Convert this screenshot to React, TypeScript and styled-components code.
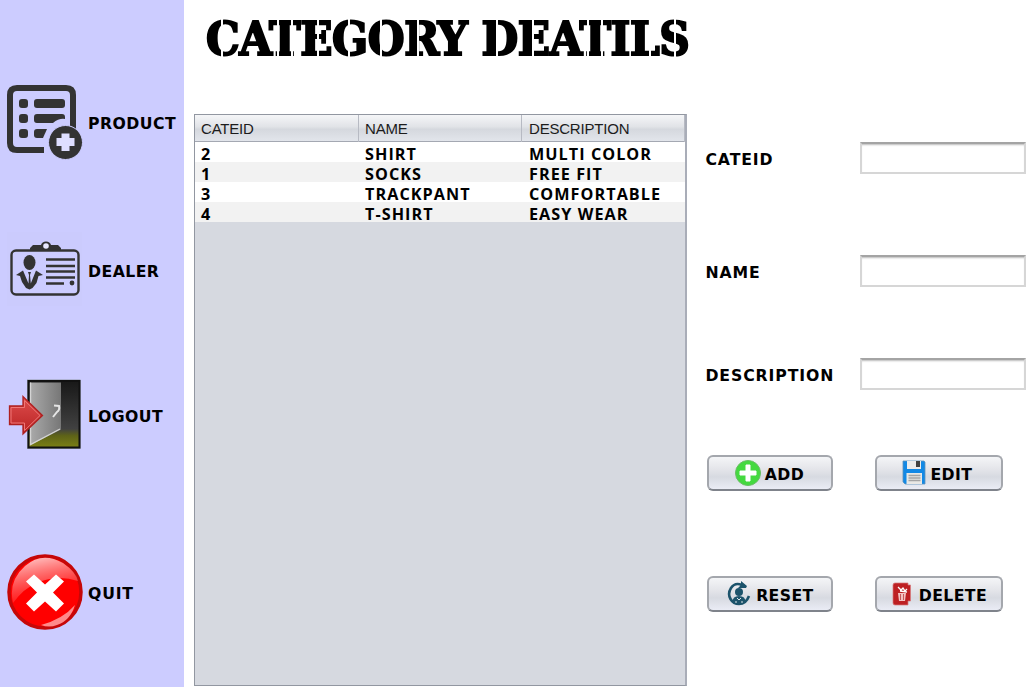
import React from "react";
import styled, { createGlobalStyle } from "styled-components";

const GlobalStyle = createGlobalStyle`
  * { box-sizing: border-box; }
  body { margin: 0; background: #fff; overflow: hidden; }
`;

const Window = styled.div`
  display: flex;
  width: 1035px;
  height: 687px;
  background: #fff;
  color: #000;
  font: bold 15.7px/20px "DejaVu Sans", sans-serif;
`;

const Sidebar = styled.nav`
  width: 184px;
  background: #ccccff;
  display: flex;
  flex-direction: column;
`;

const NavItem = styled.button<{ $gap: number; $tracking?: number }>`
  display: flex;
  align-items: center;
  height: 80px;
  margin: ${(p) => p.$gap}px 0 0;
  padding: 0 0 0 5px;
  border: 0;
  background: none;
  color: inherit;
  font: inherit;
  letter-spacing: ${(p) => p.$tracking ?? 0.45}px;
  white-space: nowrap;
  svg { flex: none; width: 80px; height: 80px; margin-right: 3px; }
  span { padding-top: 4px; }
`;

const Main = styled.main`
  width: 851px;
  display: flex;
  flex-direction: column;
`;

const stencilCuts = [222, 278, 292, 318, 349, 381, 418, 497, 533, 588, 602, 650, 675];
const stencilInk = `linear-gradient(90deg, ${stencilCuts
  .map((x) => x - 184)
  .map((x) => `#000 ${x - 0.6}px, #fff ${x - 0.6}px, #fff ${x + 0.9}px, #000 ${x + 0.9}px`)
  .join(", ")})`;

const Title = styled.h1`
  margin: 0;
  height: 114px;
  padding: 11px 0 0 22px;
  font: bold 47px/56px "DejaVu Serif", serif;
  font-stretch: condensed;
  letter-spacing: -0.4px;
  white-space: nowrap;
  background: ${stencilInk};
  -webkit-background-clip: text;
  background-clip: text;
  -webkit-text-stroke: 2px transparent;
  color: transparent;
`;

const Body = styled.div`
  display: flex;
  height: 573px;
`;

const TablePane = styled.section`
  width: 494px;
  height: 572px;
  margin-left: 10px;
  border: 1px solid #9297a1;
  border-right: 2px solid #a9adb8;
  background: #d6d9e0;
`;

const HeaderRow = styled.div`
  display: grid;
  grid-template-columns: 164px 163px 1fr;
  height: 27px;
  border-bottom: 1px solid #a4a8b2;
  background: linear-gradient(#f5f6f8 0%, #e1e3e7 45%, #d5d8de 55%, #e2e5eb 100%);
`;

const HeaderCell = styled.div`
  padding: 1px 0 0 6px;
  border-right: 1px solid #b7bac3;
  font: 15px/26px "Liberation Sans", sans-serif;
  letter-spacing: -0.2px;
  color: #1c1c1c;
  &:last-child { padding-left: 7px; }
`;

const Row = styled.div`
  display: grid;
  grid-template-columns: 164px 164px 1fr;
  height: 20px;
  background: #fff;
  &:nth-child(odd) { background: #f2f2f2; }
`;

const Cell = styled.div`
  padding: 2px 0 0 6px;
  font: bold 16.2px/20px "Open Sans", sans-serif;
  letter-spacing: 1.05px;
  white-space: nowrap;
`;

const Form = styled.form`
  width: 330px;
  margin-left: 18px;
  padding-top: 28px;
`;

const Field = styled.label<{ $after: number }>`
  display: grid;
  grid-template-columns: 155px 166px;
  align-items: center;
  height: 32px;
  margin-bottom: ${(p) => p.$after}px;
  letter-spacing: 0.9px;
  span { padding-top: 3px; }
`;

const Input = styled.input`
  width: 166px;
  height: 32px;
  border: 2px solid #d6d6d6;
  border-top-color: #a4a4a4;
  background: #fff;
  box-shadow: inset 0 2px 2px -1px #bbb;
  outline: 0;
`;

const Actions = styled.div`
  display: grid;
  grid-template-columns: 126px 128px;
  column-gap: 42px;
  row-gap: 85px;
  margin-left: 2px;
`;

const Action = styled.button<{ $gap: number; $nudge?: number }>`
  display: flex;
  align-items: center;
  justify-content: center;
  height: 36px;
  padding: 0 ${(p) => p.$nudge ?? 0}px 0 0;
  gap: ${(p) => p.$gap}px;
  border: 2px solid #a4a7ad;
  border-bottom-color: #7f838b;
  border-radius: 6px;
  background: linear-gradient(#f4f5f7 0%, #e3e4e9 40%, #d7dae1 62%, #eaecf5 100%);
  color: inherit;
  font: inherit;
  letter-spacing: 0.4px;
  svg { flex: none; }
  span { padding-top: 3px; }
`;

const ProductIcon = () => (
  <svg viewBox="0 0 80 80">
    <path d="M39 68H12q-7 0-7-7V13q0-7 7-7h49q7 0 7 7v37" fill="none" stroke="#333" strokeWidth="6" />
    <g fill="#333">
      <rect x="14" y="17" width="9" height="9" rx="3" /><rect x="29" y="17" width="31" height="9" rx="3" />
      <rect x="14" y="32" width="9" height="9" rx="3" />
      <path d="M32 32h25q3 0 3 3v2q-6-1-12 4H32q-3 0-3-3v-3q0-3 3-3Z" />
      <rect x="14" y="47" width="9" height="9" rx="3" />
      <path d="M32 47h10l-4 9h-6q-3 0-3-3v-3q0-3 3-3Z" />
    </g>
    <circle cx="60.500" cy="60.500" r="17" fill="#333" stroke="#ccccff" strokeWidth="1" />
    <path d="M56.500 51.500h8V56h5v8h-5v5h-8v-5h-5v-8h5Z" fill="#dedeff" />
  </svg>
);

const DealerIcon = () => (
  <svg viewBox="0 0 80 80">
    <rect x="2" y="2" width="75" height="74" fill="#cacafc" opacity=".5" />
    <g fill="#333">
      <rect x="6.500" y="20.500" width="67" height="44" rx="4.500" fill="#ccccff" stroke="#333" strokeWidth="2.400" />
      <path d="M25 20v-2l3-3h8q1-3.500 5-3.500t5 3.500h7l3 3v2Z" />
      <ellipse cx="24.500" cy="32.500" rx="6" ry="7.500" />
      <path d="m11 45 7-4.500 5.500 13L24 45l-1-3h3l-1 3 .8 8.500L31 40.500l7 4.500-4.500 1-2 7-4 5-3 1.500L21 58l-4-6-2-6Z" />
    </g>
    <circle cx="41" cy="16" r="2.800" fill="#e8e8ff" />
    <path d="M41 29.500h29M41 36h29M41 41.500h29M41 47.500h29M41 53.500h18" stroke="#333" strokeWidth="2.400" />
    <circle cx="67" cy="53" r="2.400" fill="#333" />
  </svg>
);

const LogoutIcon = () => (
  <svg viewBox="0 0 80 80">
    <defs>
      <linearGradient id="room" x1="0" y1="0" x2="0" y2="1">
        <stop stopColor="#181818" /><stop offset=".72" stopColor="#414141" /><stop offset=".82" stopColor="#5d6218" /><stop offset="1" stopColor="#7b8014" />
      </linearGradient>
      <linearGradient id="door"><stop stopColor="#aaa" /><stop offset="1" stopColor="#777" /></linearGradient>
      <linearGradient id="arrow" x1="0" y1="0" x2="0" y2="1"><stop stopColor="#de4d4d" /><stop offset="1" stopColor="#b92323" /></linearGradient>
    </defs>
    <rect x="22" y="4.500" width="53.500" height="69.500" fill="#929aaa" />
    <rect x="23.500" y="6" width="51" height="66.500" fill="url(#room)" stroke="#111" strokeWidth="2" />
    <path d="M25 7.500h31v47L25 70Z" fill="url(#door)" />
    <path d="M25.500 7.500v62L55 54" fill="none" stroke="#d4d4d4" strokeWidth="1.400" />
    <path d="m49 30.500 5 .5q1 4-2 6l-4 5" stroke="#e5e5e5" strokeWidth="2" fill="none" />
    <path d="M4.500 31H18V21.500L37.500 40.500 18 59V49.500H4.500Z" fill="url(#arrow)" stroke="#ae2020" strokeWidth="1.300" />
    <path d="M6 32.500h13.500v-7L35 40.500 19.500 55.500V48H6Z" fill="none" stroke="#ef7777" />
  </svg>
);

const QuitIcon = () => (
  <svg viewBox="0 0 80 80">
    <defs>
      <linearGradient id="gloss" x1="0" y1="0" x2=".3" y2="1"><stop stopColor="#fff" stopOpacity=".85" /><stop offset="1" stopColor="#f44" stopOpacity=".35" /></linearGradient>
    </defs>
    <circle cx="40" cy="40" r="36" fill="red" stroke="#c60708" strokeWidth="3.500" />
    <path d="M8 51Q3 29 20 14T58 11Q71 20 73 29 52 22 32 31 19 36 8 51Z" fill="url(#gloss)" />
    <path d="M36 73q22-6 34-20-5 16-18 20-8 3-16 0Z" fill="#ff8a8a" />
    <path d="m29 22.500 11 10 11-10 8 7-11 11 11 11-8 8-11-10-11 10-8-8 11-11-11-11Z" fill="#fff" />
  </svg>
);

const AddIcon = () => (
  <svg width="26" height="26" viewBox="0 0 26 26">
    <circle cx="13" cy="13" r="12.500" fill="#44d93f" stroke="#67be62" />
    <path d="M11 5h4v6h6v4h-6v6h-4v-6H5v-4h6Z" fill="#fff" stroke="#fff" strokeLinejoin="round" />
  </svg>
);

const EditIcon = () => (
  <svg width="24" height="26" viewBox="0 0 24 26">
    <path d="M1 1h21l1 1v22H3l-2-2Z" fill="#1389e5" stroke="#5e92bb" strokeWidth=".8" />
    <path d="M5 1h14v8H5Z" fill="#ececec" /><path d="M14 1h4v6h-4Z" fill="#424242" />
    <path d="M4.500 13H20v11H4.500Z" fill="#e9e8e5" />
    <path d="M6.500 15.500h12M6.500 18h12M6.500 20.500h12" stroke="#a4a4a4" strokeWidth="1.300" />
  </svg>
);

const ResetIcon = () => (
  <svg width="24" height="26" viewBox="0 0 24 26">
    <path d="M15 4Q8 1 4 7c-5 8 1 16 8 16q7 0 10-8" fill="none" stroke="#1c536b" strokeWidth="2.600" />
    <path d="m14 0 6 5-1 2h-8l3-3Z" fill="#1c536b" />
    <ellipse cx="12" cy="11" rx="4" ry="4" fill="#1c536b" />
    <path d="M5.500 21q0-6 6.500-6t6.500 6q-6.500 4-13 0Z" fill="#1c536b" />
    <path d="m10 17 2 2 2-2M9 20v2M15 20v2" stroke="#dce5e9" fill="none" />
  </svg>
);

const DeleteIcon = () => (
  <svg width="20" height="25" viewBox="0 0 20 25">
    <path d="M3 1h13v2h2.500v16H16v4H3q-2 0-2-2V3q0-2 2-2Z" fill="#bd2023" stroke="#d7797b" strokeWidth=".7" />
    <path d="M6 11h8l-1 8H7Z" fill="#f3c2c2" />
    <path d="m6 5 3 3 2-2 2 3 2-2M8 9l7 1" fill="none" stroke="#fff" strokeWidth="1.300" />
    <path d="M8.500 12v6M11.500 12v6" stroke="#b83e40" strokeWidth=".8" />
  </svg>
);

const rows = [
  ["2", "SHIRT", "MULTI COLOR"],
  ["1", "SOCKS", "FREE FIT"],
  ["3", "TRACKPANT", "COMFORTABLE"],
  ["4", "T-SHIRT", "EASY WEAR"],
];

export default function App() {
  return (
    <>
      <GlobalStyle />
      <Window>
        <Sidebar>
          <NavItem $gap={82}><ProductIcon /><span>PRODUCT</span></NavItem>
          <NavItem $gap={68}><DealerIcon /><span>DEALER</span></NavItem>
          <NavItem $gap={65}><LogoutIcon /><span>LOGOUT</span></NavItem>
          <NavItem $gap={97} $tracking={0.8}><QuitIcon /><span>QUIT</span></NavItem>
        </Sidebar>
        <Main>
          <Title>CATEGORY DEATILS</Title>
          <Body>
            <TablePane>
              <HeaderRow>
                {["CATEID", "NAME", "DESCRIPTION"].map((name) => <HeaderCell key={name}>{name}</HeaderCell>)}
              </HeaderRow>
              {rows.map((row) => (
                <Row key={row[0]}>{row.map((value) => <Cell key={value}>{value}</Cell>)}</Row>
              ))}
            </TablePane>
            <Form>
              <Field $after={81}><span>CATEID</span><Input /></Field>
              <Field $after={71}><span>NAME</span><Input /></Field>
              <Field $after={65}><span>DESCRIPTION</span><Input /></Field>
              <Actions>
                <Action type="button" $gap={4} $nudge={2}><AddIcon /><span>ADD</span></Action>
                <Action type="button" $gap={4} $nudge={4}><EditIcon /><span>EDIT</span></Action>
                <Action type="button" $gap={5}><ResetIcon /><span>RESET</span></Action>
                <Action type="button" $gap={7}><DeleteIcon /><span>DELETE</span></Action>
              </Actions>
            </Form>
          </Body>
        </Main>
      </Window>
    </>
  );
}
